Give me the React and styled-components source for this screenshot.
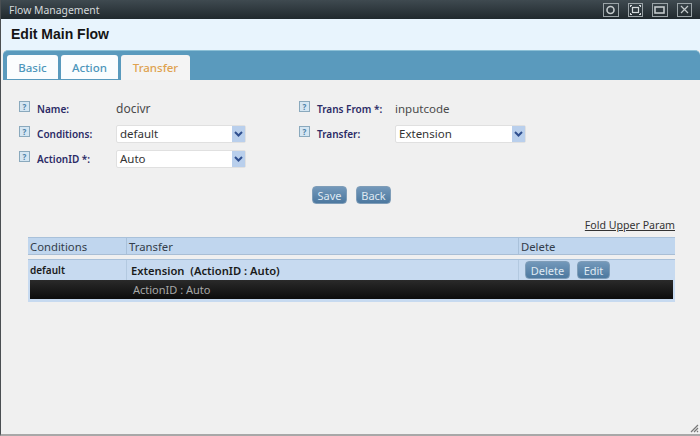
import styled, {createGlobalStyle} from 'styled-components';

const GlobalStyle = createGlobalStyle`
  html, body {
    margin: 0;
    padding: 0;
    background: #f0f0f0;
    overflow: hidden;
  }
  body {
    font-family: "Noto Sans", "DejaVu Sans", sans-serif;
    font-size: 11px;
  }
`;

const Window = styled.div`
  width: 700px;
  height: 436px;
  box-sizing: border-box;
  display: flex;
  flex-direction: column;
  position: relative;
  border-left: 1px solid #4a4f52;
  border-bottom: 2px solid #a8a8a8;
  background: #f0f0f0;
`;

const TitleBar = styled.div`
  height: 19px;
  flex: none;
  display: flex;
  align-items: center;
  justify-content: space-between;
  padding: 0 8px 0 8px;
  background: linear-gradient(#3f4a50, #20292e);
  color: #d5dadc;
  font-size: 10.4px;
`;

const WindowButtons = styled.div`
  display: flex;
  gap: 9px;
`;

const WindowButton = styled.span`
  width: 15.5px;
  height: 14px;
  box-sizing: border-box;
  border: 1px solid #9aa3a7;
  display: flex;
  align-items: center;
  justify-content: center;
  svg {
    display: block;
  }
`;

const PageTitle = styled.div`
  height: 31px;
  flex: none;
  box-sizing: border-box;
  padding: 7px 0 0 10px;
  background: #e8f4fd;
  color: #151515;
  font-family: "Liberation Sans", Arial, sans-serif;
  font-weight: bold;
  font-size: 14px;
`;

const TabBar = styled.div`
  height: 30px;
  flex: none;
  box-sizing: border-box;
  margin-left: 2px;
  padding: 4px 0 0 4px;
  display: flex;
  gap: 3px;
  background: #5a9abd;
  border-radius: 5px 5px 0 0;
  border-top: 1px solid #8cc0d6;
`;

const Tab = styled.div`
  box-sizing: border-box;
  height: ${p => (p.$active ? '25px' : '24px')};
  width: ${p => p.$width}px;
  display: flex;
  align-items: center;
  justify-content: center;
  border-radius: 3px 3px 0 0;
  background: ${p => (p.$active ? '#f4f4f4' : '#fbfdfe')};
  color: ${p => (p.$active ? '#dfa24f' : '#4d96bb')};
  font-weight: 500;
  font-size: 11.5px;
`;

const Form = styled.div`
  display: grid;
  grid-template-columns: 280px 1fr;
  padding: 16px 0 0 18px;
`;

const FormColumn = styled.div`
  display: flex;
  flex-direction: column;
`;

const FormRow = styled.div`
  height: 25px;
  display: flex;
  align-items: center;
`;

const HelpIcon = styled.span`
  width: 11px;
  height: 11px;
  box-sizing: border-box;
  margin-right: 7px;
  margin-top: -4px;
  flex: none;
  display: flex;
  align-items: center;
  justify-content: center;
  border: 1px solid #8aa9bd;
  background: #d5e6f2;
  color: #4d82a6;
  font-size: 8px;
  font-weight: bold;
`;

const Label = styled.span`
  width: ${p => p.$width}px;
  flex: none;
  color: #2b2b66;
  font-weight: 600;
  font-size: 10px;
`;

const Value = styled.span`
  color: #4a4a4a;
  font-size: ${p => p.$size || 12}px;
`;

const SelectBox = styled.div`
  width: ${p => p.$width}px;
  height: 18px;
  box-sizing: border-box;
  display: flex;
  align-items: center;
  justify-content: space-between;
  padding-left: 3px;
  background: #fff;
  border: 1px solid #e0e0e0;
  border-radius: 2px;
  color: #333;
  font-size: 11.5px;
`;

const SelectArrow = styled.span`
  width: 13px;
  height: 100%;
  display: flex;
  align-items: center;
  justify-content: center;
  background: #b9cfec;
`;

const Buttons = styled.div`
  display: flex;
  gap: 9px;
  margin: 15px 0 0 311px;
`;

const Button = styled.button`
  height: 18px;
  width: ${p => p.$width}px;
  padding: 0;
  margin: 0;
  border: 1px solid #7f9db8;
  border-radius: 4px;
  background: linear-gradient(#7398ba, #4c789f);
  color: #dfe9f2;
  font-family: inherit;
  font-size: 11px;
  line-height: 15px;
`;

const FoldLink = styled.a`
  display: block;
  text-align: right;
  margin: 14px 25px 0 0;
  color: #333;
  font-size: 10.6px;
  line-height: 14px;
  text-decoration: underline;
`;

const TableWrap = styled.div`
  margin: 5px 25px 0 27px;
`;

const HeaderRow = styled.div`
  display: grid;
  grid-template-columns: 99px 392px 1fr;
  height: 18px;
  box-sizing: border-box;
  align-items: center;
  background: #c0d6ee;
  border-top: 1px solid #a9c1da;
  border-bottom: 1px solid #a9bed5;
  color: #333d4a;
  font-size: 11.3px;
`;

const HeaderCell = styled.div`
  height: 100%;
  display: flex;
  align-items: center;
  padding-left: 2px;
  border-right: ${p => (p.$last ? 'none' : '1px solid #a9c1da')};
`;

const DataBlock = styled.div`
  margin-top: 4px;
  background: #c7daf0;
  border-top: 1px solid #a9c1da;
  padding-bottom: 3px;
`;

const DataRow = styled.div`
  display: grid;
  grid-template-columns: 99px 392px 1fr;
  height: 20px;
  align-items: center;
`;

const DataCell = styled.div`
  height: 100%;
  display: flex;
  align-items: center;
  gap: 7px;
  padding-left: ${p => p.$pad || 2}px;
  border-right: ${p => (p.$last ? 'none' : '1px solid #b3c9e0')};
  color: #1a1a1a;
  font-size: ${p => p.$size || 10}px;
  font-weight: 600;
`;

const DetailRow = styled.div`
  height: 19px;
  margin: 0 2px;
  display: flex;
  align-items: center;
  padding-left: 103px;
  background: linear-gradient(#2a2a2a, #0c0c0c);
  color: #a8a8a8;
  font-size: 11px;
`;

const Grip = styled.svg`
  position: absolute;
  right: 1px;
  bottom: 1px;
`;

function Arrow() {
    return (
        <SelectArrow>
            <svg width="9" height="6" viewBox="0 0 9 6">
                <path d="M1 1l3.5 3.5L8 1" fill="none" stroke="#2f4f8f" strokeWidth="2"/>
            </svg>
        </SelectArrow>
    );
}

function Field({label, width, children}) {
    return (
        <FormRow>
            <HelpIcon>?</HelpIcon>
            <Label $width={width}>{label}</Label>
            {children}
        </FormRow>
    );
}

export default function App() {
    return (
        <Window>
            <GlobalStyle/>
            <TitleBar>
                <span>Flow Management</span>
                <WindowButtons>
                    <WindowButton>
                        <svg width="11" height="10" viewBox="0 0 11 10">
                            <circle cx="5.5" cy="5" r="3.5" fill="none" stroke="#c4cacc" strokeWidth="1.6"/>
                        </svg>
                    </WindowButton>
                    <WindowButton>
                        <svg width="11" height="10" viewBox="0 0 11 10">
                            <rect x="2.5" y="2.5" width="6" height="5" fill="none" stroke="#d5dadc" strokeWidth="1.2"/>
                            <path d="M0 0h2v1h-1v1h-1zM11 0h-2v1h1v1h1zM0 10h2v-1h-1v-1h-1zM11 10h-2v-1h1v-1h1z" fill="#d5dadc"/>
                        </svg>
                    </WindowButton>
                    <WindowButton>
                        <svg width="11" height="8" viewBox="0 0 11 8">
                            <rect x="1" y="1" width="9" height="6" fill="none" stroke="#c4cacc" strokeWidth="1.6"/>
                        </svg>
                    </WindowButton>
                    <WindowButton>
                        <svg width="9" height="9" viewBox="0 0 9 9">
                            <path d="M1 1l7 7M8 1l-7 7" stroke="#c4cacc" strokeWidth="1.2"/>
                        </svg>
                    </WindowButton>
                </WindowButtons>
            </TitleBar>

            <PageTitle>Edit Main Flow</PageTitle>

            <TabBar>
                <Tab $width={51}>Basic</Tab>
                <Tab $width={57}>Action</Tab>
                <Tab $width={69} $active>Transfer</Tab>
            </TabBar>

            <Form>
                <FormColumn>
                    <Field label="Name:" width={79}><Value>docivr</Value></Field>
                    <Field label="Conditions:" width={79}>
                        <SelectBox $width={130}>default<Arrow/></SelectBox>
                    </Field>
                    <Field label="ActionID *:" width={79}>
                        <SelectBox $width={130}>Auto<Arrow/></SelectBox>
                    </Field>
                </FormColumn>
                <FormColumn>
                    <Field label="Trans From *:" width={78}><Value $size={11.5}>inputcode</Value></Field>
                    <Field label="Transfer:" width={78}>
                        <SelectBox $width={131}>Extension<Arrow/></SelectBox>
                    </Field>
                </FormColumn>
            </Form>

            <Buttons>
                <Button $width={35}>Save</Button>
                <Button $width={35}>Back</Button>
            </Buttons>

            <FoldLink>Fold Upper Param</FoldLink>

            <TableWrap>
                <HeaderRow>
                    <HeaderCell>Conditions</HeaderCell>
                    <HeaderCell>Transfer</HeaderCell>
                    <HeaderCell $last>Delete</HeaderCell>
                </HeaderRow>
                <DataBlock>
                    <DataRow>
                        <DataCell>default</DataCell>
                        <DataCell $pad={4} $size={11.2}>Extension&nbsp; (ActionID : Auto)</DataCell>
                        <DataCell $last $pad={6}>
                            <Button $width={45}>Delete</Button>
                            <Button $width={33}>Edit</Button>
                        </DataCell>
                    </DataRow>
                    <DetailRow>ActionID : Auto</DetailRow>
                </DataBlock>
            </TableWrap>

            <Grip width="10" height="10" viewBox="0 0 10 10">
                <path d="M9 2L2 9M9 5L5 9M9 8L8 9" stroke="#777" strokeWidth="1.2"/>
            </Grip>
        </Window>
    );
}
